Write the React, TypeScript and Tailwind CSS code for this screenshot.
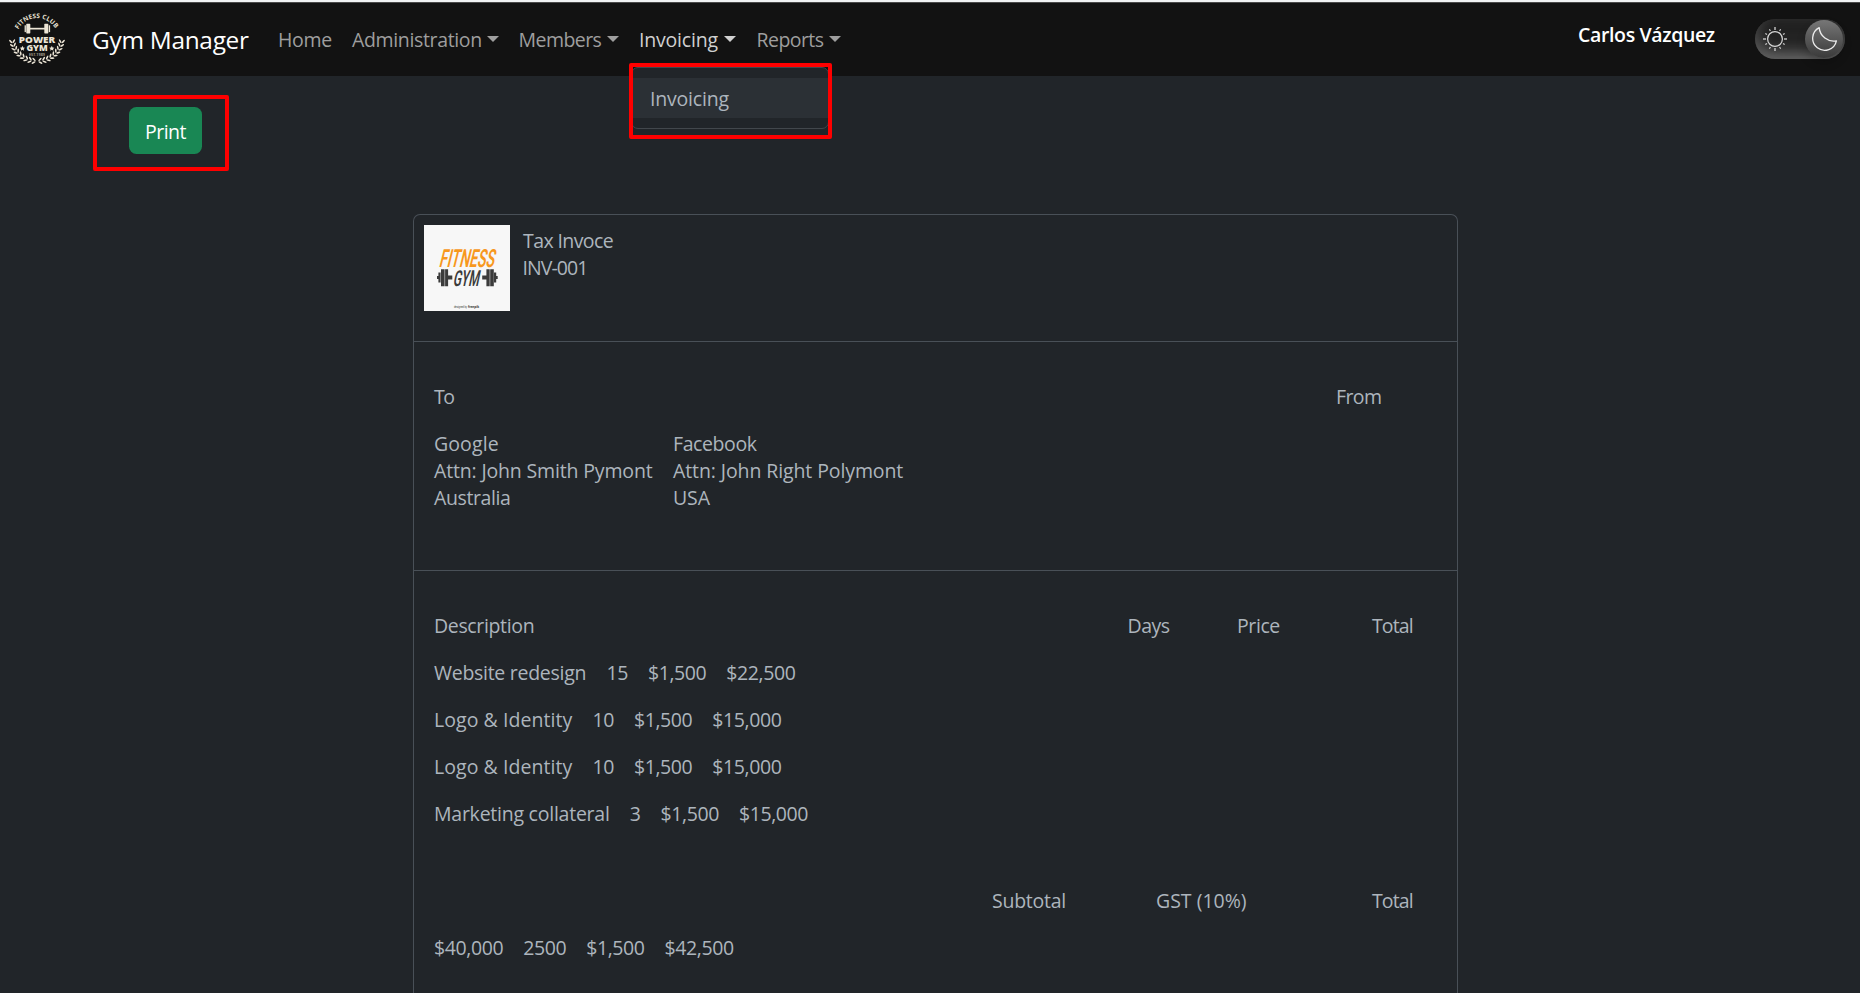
import React from "react";

const cream = "#ece5d6";

function ClubLogo() {
  const leaves = [];
  for (let i = 0; i < 9; i++) {
    const angle = 172 - i * 9.2;
    const rad = (angle * Math.PI) / 180;
    const x = 25 * Math.cos(rad);
    const y = 23.6 * Math.sin(rad);
    leaves.push({ x, y, angle });
  }
  const branch = leaves.map((l) => (
    <g key={l.angle} transform={`translate(${l.x} ${l.y}) rotate(${l.angle - 90})`}>
      <ellipse cx="-0.6" cy="-1.5" rx="2.2" ry="0.85" transform="rotate(38)" />
      <ellipse cx="-0.6" cy="1.5" rx="2.2" ry="0.85" transform="rotate(-38)" />
    </g>
  ));
  return (
    <svg width="76" height="73" viewBox="0 3 76 73" fill={cream} fontFamily="Open Sans, sans-serif" className="shrink-0">
      <path id="club-arc" d="M18.4 29.4 A21.2 21.2 0 0 1 55.8 29.4" fill="none" />
      <text fontSize="6.4" fontWeight="700">
        <textPath href="#club-arc" textLength="44.5" startOffset="0">FITNESS CLUB</textPath>
      </text>
      <rect x="29" y="27.8" width="16" height="1.7" />
      <rect x="26.3" y="23.8" width="4" height="9.6" rx="0.6" />
      <rect x="24.6" y="25.3" width="1.3" height="6.8" />
      <rect x="44.3" y="23.8" width="4" height="9.6" rx="0.6" />
      <rect x="48.8" y="25.3" width="1.3" height="6.8" />
      <text x="18.8" y="43.2" fontSize="9.2" fontWeight="800" textLength="36.4" lengthAdjust="spacingAndGlyphs">POWER</text>
      <text x="26.4" y="51.3" fontSize="8.6" fontWeight="800" textLength="21.4" lengthAdjust="spacingAndGlyphs">GYM</text>
      <path d="M22.4 45.8l.8 1.7 1.8.2-1.3 1.2.4 1.8-1.7-.9-1.6.9.3-1.8-1.3-1.2 1.8-.2z" />
      <path d="M51.8 45.8l.8 1.7 1.8.2-1.3 1.2.4 1.8-1.7-.9-1.6.9.3-1.8-1.3-1.2 1.8-.2z" />
      <text x="29" y="55.8" fontSize="3.6" fontWeight="600" fillOpacity="0.75" textLength="16" lengthAdjust="spacingAndGlyphs">EST.1989</text>
      <g transform="translate(37 37.6)">{branch}</g>
      <g transform="translate(37 37.6) scale(-1 1)">{branch}</g>
    </svg>
  );
}

function FitnessLogo() {
  return (
    <svg width="86" height="86" viewBox="0 0 86 86" className="shrink-0 bg-[#f7f7f7]" fontFamily="Roboto, sans-serif" fill="#3b3b3b">
      <g transform="translate(14.6 41.7) skewX(-14)">
        <text fontSize="25" fontWeight="600" fill="#f7981d" textLength="55" lengthAdjust="spacingAndGlyphs">FITNESS</text>
      </g>
      <g transform="translate(28.4 60.8) skewX(-12)">
        <text fontSize="22" fontWeight="600" textLength="26" lengthAdjust="spacingAndGlyphs">GYM</text>
      </g>
      <path d="M13 51h2v3h-2zM14.4 47.5h2.2v10h-2.2zM17 44.3h3.6v17H17zM21.1 44.3h3v17h-3zM24 50.6h4.3v3.8H24z" />
      <path d="M71.7 51h2v3h-2zM70 47.5h2.2v10H70zM66.2 44.3h3.6v17h-3.6zM62.4 44.3h3.3v17h-3.3zM58.2 50.6h4.3v3.8h-4.3z" />
      <text x="30" y="83.2" fontSize="2.8" textLength="13" lengthAdjust="spacingAndGlyphs">designed by</text>
      <text x="44" y="83.2" fontSize="3" fontWeight="700" textLength="11" lengthAdjust="spacingAndGlyphs">freepik</text>
    </svg>
  );
}

function Caret() {
  return <span className="-mt-px h-0 w-0 border-x-6 border-t-6 border-x-transparent border-t-current" />;
}

const rays = Array.from({ length: 12 }, (_, i) => i * 30);

function ThemeToggle() {
  return (
    <div className="flex h-10 w-[90px] items-center rounded-full bg-[#242424] pr-[2px] pl-[8px] shadow-[inset_0_5px_15px_rgba(0,0,0,0.4),inset_0_-5px_15px_rgba(255,255,255,0.4)]">
      <svg width="24" height="24" viewBox="-12 -12 24 24" fill="none" stroke="#d9d9d9">
        <circle r="7.4" strokeWidth="1.2" />
        {rays.map((a) => (
          <path
            key={a}
            d={a % 90 === 0 ? "M0 -9v-3" : "M0 -9.2v-2"}
            strokeWidth={a % 90 === 0 ? 1.8 : 1.2}
            strokeOpacity={a % 90 === 0 ? 0.7 : 0.95}
            transform={`rotate(${a})`}
          />
        ))}
      </svg>
      <div className="ml-auto flex size-[38px] items-center justify-center rounded-full bg-linear-to-b from-[#777] to-[#3a3a3a] shadow-[0_5px_10px_rgba(0,0,0,0.2)]">
        <svg width="26" height="26" viewBox="0 0 26 26" fill="none" stroke="#ececec" strokeWidth="1.3" strokeLinejoin="round" className="ml-[2px]">
          <path d="M7.2 1.6 A12 12 0 1 0 24.4 14.8 A14.6 14.6 0 0 1 7.2 1.6Z" />
        </svg>
      </div>
    </div>
  );
}

type Item = { name: string; nameClass: string; values: string[] };

const items: Item[] = [
  { name: "Website redesign", nameClass: "w-[152.4px] tracking-[-0.28px]", values: ["15", "$1,500", "$22,500"] },
  { name: "Logo & Identity", nameClass: "w-[138.4px] tracking-[0.06px]", values: ["10", "$1,500", "$15,000"] },
  { name: "Logo & Identity", nameClass: "w-[138.4px] tracking-[0.06px]", values: ["10", "$1,500", "$15,000"] },
  { name: "Marketing collateral", nameClass: "w-[175.8px] tracking-[-0.24px]", values: ["3", "$1,500", "$15,000"] },
];

const totals = ["$40,000", "2500", "$1,500", "$42,500"];

export default function App() {
  return (
    <div className="flex h-[993px] flex-col overflow-hidden bg-[#212529] font-['Open_Sans','Noto_Sans',sans-serif] text-[19.5px] leading-[27px] whitespace-nowrap text-[#adb5bd]">
      <header className="h-[76px] shrink-0 border-t-2 border-[#f1f3f4] bg-[#121212]">
        <nav className="flex h-[74px] items-center border-t border-[#4b4b4b] text-[#9e9e9e]">
          <ClubLogo />
          <a className="ml-[16px] w-[186px] text-[24.4px] leading-[34px] tracking-[-0.28px] text-white">Gym Manager</a>
          <a className="w-[74px] tracking-[-0.3px]">Home</a>
          <div className="flex w-[166.5px] items-center">
            <span className="w-[135px] tracking-[-0.35px]">Administration</span>
            <Caret />
          </div>
          <div className="flex w-[120.5px] items-center">
            <span className="w-[88.6px] tracking-[-0.55px]">Members</span>
            <Caret />
          </div>
          <div className="relative flex w-[117.5px] items-center text-[#d0d0d0]">
            <span className="w-[85px] tracking-[-0.2px]">Invoicing</span>
            <Caret />
            <div className="absolute top-[36px] left-[-10px] h-[78px] w-[203px]">
              <div className="mt-[5px] ml-[2px] h-[62px] w-[198px] rounded-[7px] border border-[#42474c] bg-[#212529] pt-[10px]">
                <div className="flex h-10 items-center bg-[#2b3035] pl-[18px] tracking-[-0.2px] text-[#adb5bd]">Invoicing</div>
              </div>
              <div className="absolute inset-x-0 top-[0.5px] bottom-[1.5px] rounded-[2px] border-4 border-[#ff0000]" />
            </div>
          </div>
          <div className="flex items-center">
            <span className="w-[72.5px] tracking-[-0.55px]">Reports</span>
            <Caret />
          </div>
          <div className="mr-[15px] ml-auto flex items-start self-start">
            <span className="mt-[18px] w-[177px] font-semibold tracking-[-0.36px] text-white">Carlos Vázquez</span>
            <div className="mt-4">
              <ThemeToggle />
            </div>
          </div>
        </nav>
      </header>

      <div className="mt-[19px] ml-[93px] flex h-[76px] w-[136px] shrink-0 rounded-[2px] border-4 border-[#ff0000] pt-[8px] pl-[32px]">
        <button className="h-[47px] w-[73px] rounded-[7.5px] bg-[#198754] pt-px tracking-[-0.5px] text-white">Print</button>
      </div>

      <main className="mt-[43px] ml-[413px] w-[1045px] grow rounded-t-[7px] border-x border-t border-[#495057]">
        <section className="flex h-[127px] gap-[13px] border-b border-[#495057] pt-[10px] pl-[10px]">
          <FitnessLogo />
          <div className="pt-[2px]">
            <p className="tracking-[-0.6px]">Tax Invoce</p>
            <p className="-ml-[0.5px] tracking-[-0.95px]">INV-001</p>
          </div>
        </section>

        <section className="h-[229px] border-b border-[#495057] px-5 pt-[41px]">
          <div className="flex">
            <span className="w-[902px] tracking-[-1.5px]">To</span>
            <span className="tracking-[-0.6px]">From</span>
          </div>
          <div className="mt-5 flex">
            <div className="w-[239px]">
              <p className="tracking-[0.1px]">Google</p>
              <p className="tracking-[-0.16px]">Attn: John Smith Pymont</p>
              <p className="tracking-[-0.4px]">Australia</p>
            </div>
            <div>
              <p className="tracking-[-0.4px]">Facebook</p>
              <p className="tracking-[-0.1px]">Attn: John Right Polymont</p>
              <p className="tracking-[-0.1px]">USA</p>
            </div>
          </div>
        </section>

        <section className="px-5 pt-[41px]">
          <div className="flex">
            <span className="w-[693.5px] tracking-[-0.35px]">Description</span>
            <span className="w-[109.5px] tracking-[-0.5px]">Days</span>
            <span className="w-[135px] tracking-[-0.4px]">Price</span>
            <span className="tracking-[-0.9px]">Total</span>
          </div>
          {items.map((item, i) => (
            <div key={i} className="mt-5 flex gap-5">
              <span className={item.nameClass}>{item.name}</span>
              {item.values.map((v, j) => (
                <span key={j} className="tracking-[-0.4px]">{v}</span>
              ))}
            </div>
          ))}
          <div className="mt-[60px] flex pl-[558px]">
            <span className="w-[164px] tracking-[-0.25px]">Subtotal</span>
            <span className="w-[216px] tracking-[0px]">GST (10%)</span>
            <span className="tracking-[-0.9px]">Total</span>
          </div>
          <div className="mt-5 flex gap-5">
            {totals.map((v, i) => (
              <span key={i} className="tracking-[-0.4px]">{v}</span>
            ))}
          </div>
        </section>
      </main>
    </div>
  );
}
